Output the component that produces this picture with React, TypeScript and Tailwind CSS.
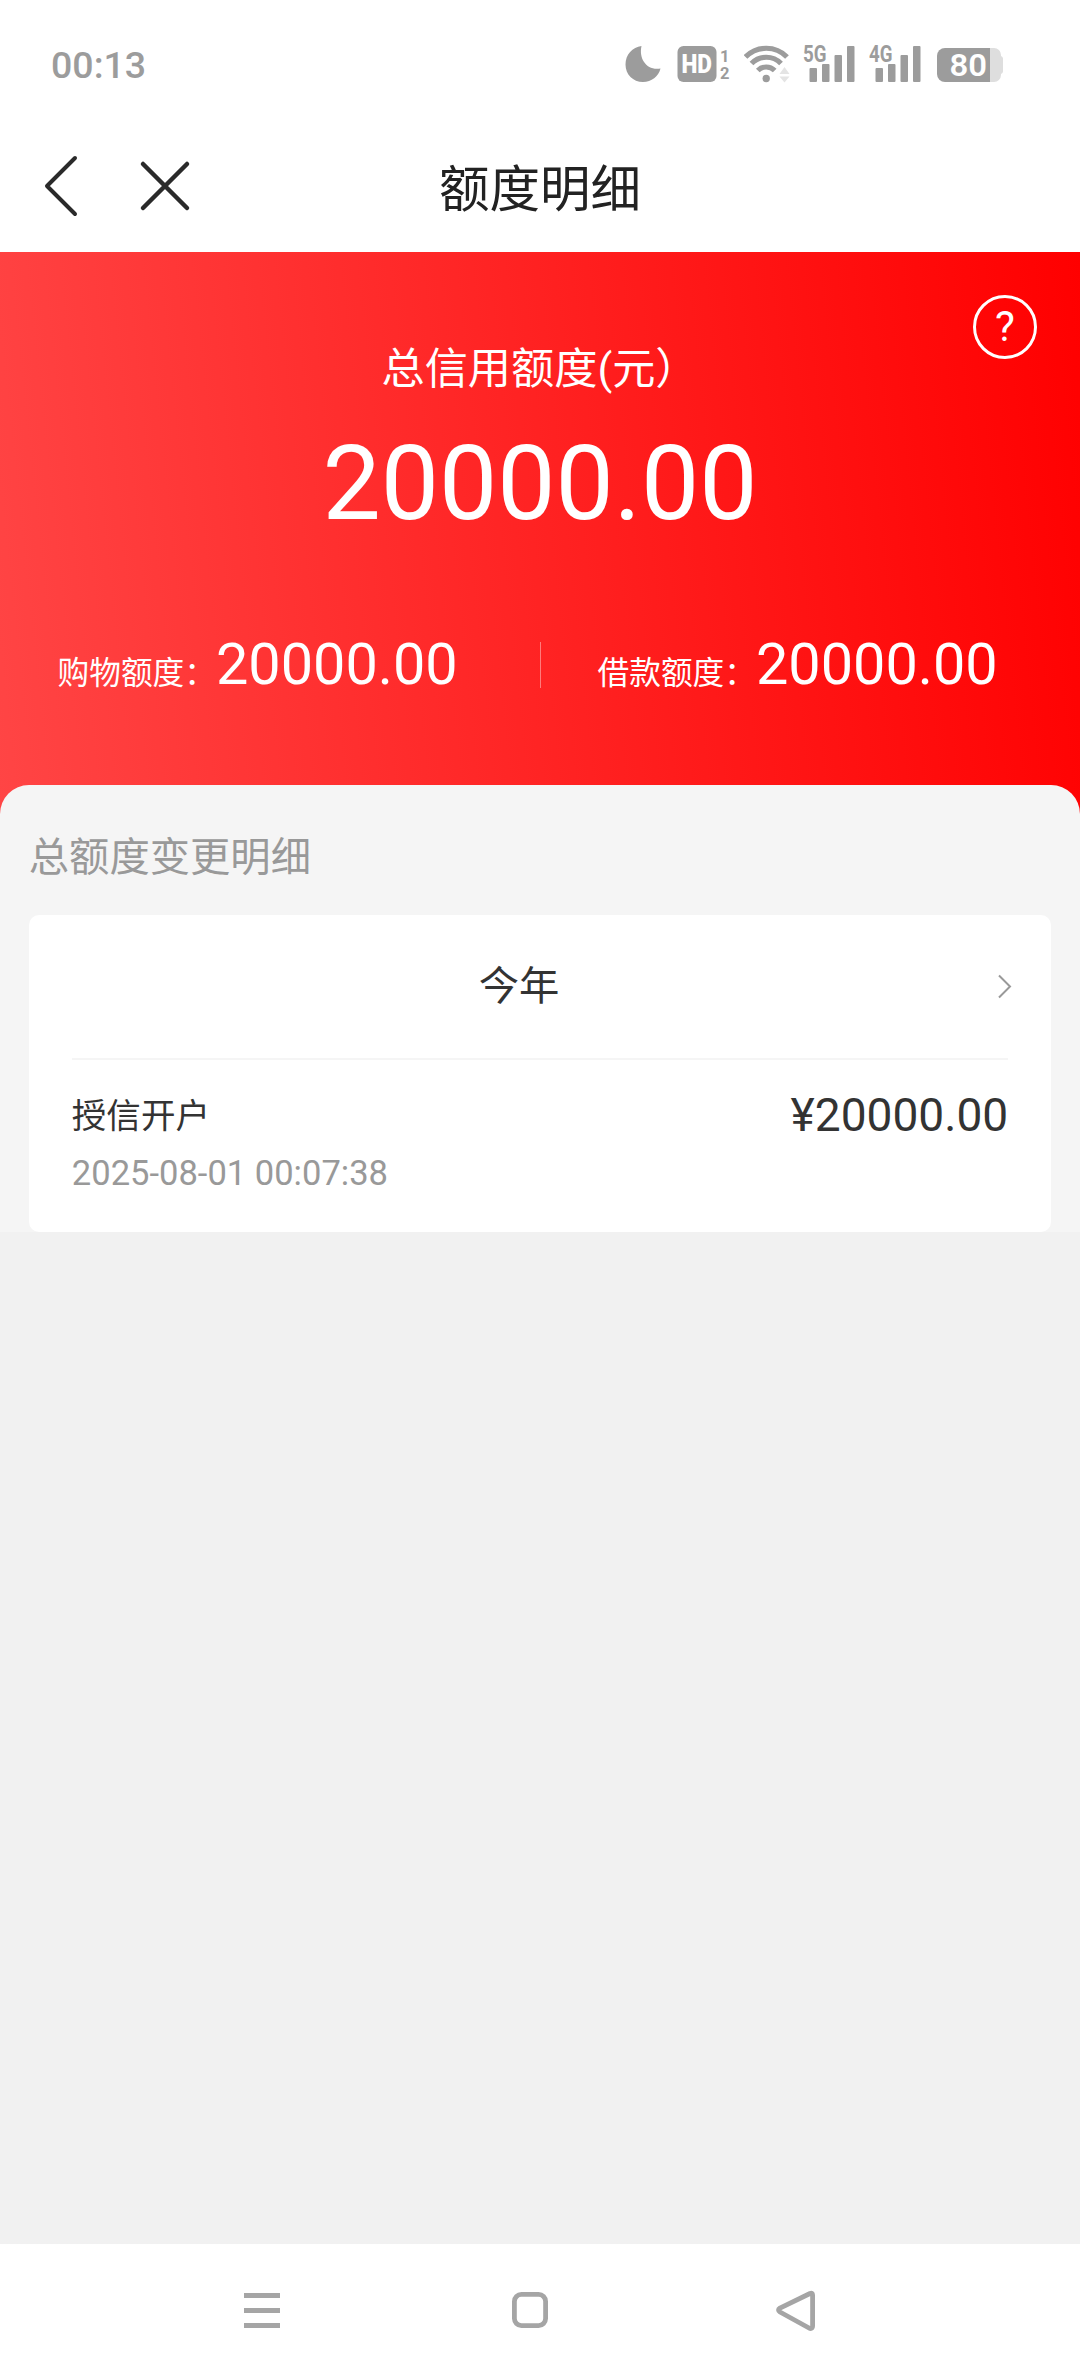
import type { ReactNode } from "react";

type QuotaProps = {
  label: string;
  amount: string;
};

type SignalProps = {
  label: string;
};

function Signal({ label }: SignalProps) {
  return (
    <svg width="54" height="56" viewBox="0 -8 54 56" fill="#9c9c9c">
      <text
        x="0"
        y="17.5"
        fontSize="23.500"
        fontWeight="700"
        fontFamily="Roboto"
        textLength="23.500"
        lengthAdjust="spacingAndGlyphs"
      >
        {label}
      </text>
      <rect x="6.5" y="24" width="7.5" height="14" rx="1" />
      <rect x="19" y="20" width="7.5" height="18" rx="1" />
      <rect x="31.5" y="11" width="7.5" height="27" rx="1" />
      <rect x="44" y="2" width="7.5" height="36" rx="1" />
    </svg>
  );
}

function StatusBar() {
  return (
    <div className="flex h-[128px] items-center justify-between pl-[51px] pr-[77px] text-[#9c9c9c]">
      <span className="mt-[3px] font-[Roboto] text-[37.500px] font-medium leading-none">
        00:13
      </span>

      <div className="flex h-10 items-center">
        {/* DO NOT DISTURB */}
        <svg width="36" height="40" viewBox="0 0 36 40" fill="#9c9c9c">
          <path d="M16.500 2C13.500 15 22 27 35.500 24.500C33.500 32.500 26.500 38 18 38C8 38 0.500 30.500 0.500 20.500C0.500 10.500 7.500 3 16.500 2Z" />
        </svg>

        {/* HD */}
        <svg
          className="ml-4"
          width="54"
          height="40"
          viewBox="0 0 54 40"
          fill="#9c9c9c"
          fontFamily="Roboto"
          fontWeight="700"
        >
          <rect x="0.500" y="2" width="39" height="36" rx="6" />
          <text
            x="4.500"
            y="29"
            fontSize="25"
            fontWeight="900"
            fill="#fff"
            textLength="30.500"
            lengthAdjust="spacingAndGlyphs"
          >
            HD
          </text>
          <text x="43" y="17.500" fontSize="16.500">1</text>
          <text x="43" y="35" fontSize="16.500">2</text>
        </svg>

        {/* WIFI */}
        <svg
          className="ml-[13px]"
          width="48"
          height="40"
          viewBox="0 0 48 40"
          fill="none"
          stroke="#9c9c9c"
          strokeWidth="5.200"
        >
          <path d="M1.500 13A29 29 0 0 1 43 13" />
          <path d="M7.500 19.500A20.500 20.500 0 0 1 37 19.500" />
          <path d="M13.800 26.500A12 12 0 0 1 30.700 26.500" />
          <circle cx="22.200" cy="34.500" r="3.700" fill="#9c9c9c" stroke="none" />
          <path d="M40.500 23l5 7h-10zM40.500 38.500l5-6h-10z" fill="#e4e4e4" stroke="none" />
        </svg>

        <div className="ml-[11px] flex gap-3">
          <Signal label="5G" />
          <Signal label="4G" />
        </div>

        {/* BATTERY */}
        <svg className="ml-[14px]" width="66" height="40" viewBox="0 0 66 40">
          <path d="M52 4h5a7 7 0 0 1 7 7v1a3 3 0 0 1 2 3v12a3 3 0 0 1-2 3v1a7 7 0 0 1-7 7h-5z" fill="#dedede" />
          <path d="M8 4h45v34H8a8 8 0 0 1-8-8V12a8 8 0 0 1 8-8z" fill="#9c9c9c" />
          <text
            x="12.500"
            y="32"
            fill="#fff"
            fontFamily="Roboto"
            fontSize="31"
            fontWeight="600"
            textLength="37.500"
            lengthAdjust="spacingAndGlyphs"
          >
            80
          </text>
        </svg>
      </div>
    </div>
  );
}

function Header() {
  return (
    <header className="grid h-[124px] grid-cols-3 items-center px-[43px] text-[#222]">
      <div className="mt-[-8px] flex items-center">
        <svg width="36" height="64" viewBox="0 0 36 64" fill="none" stroke="#2a2a2a" strokeWidth="4" strokeLinecap="round" strokeLinejoin="round">
          <path d="M32 4L4 32L32 60" />
        </svg>
        <svg className="ml-[60px]" width="52" height="52" viewBox="0 0 52 52" stroke="#2a2a2a" strokeWidth="4.500" strokeLinecap="round">
          <path d="M4 4L48 48M48 4L4 48" />
        </svg>
      </div>

      <h1 className="whitespace-nowrap text-center text-[50.500px] leading-none">额度明细</h1>
    </header>
  );
}

function Quota({ label, amount }: QuotaProps) {
  return (
    <div className="flex flex-1 items-baseline pl-[57.600px]">
      <span className="text-[31.680px] leading-none">{label}</span>
      <span className="text-[57.600px] leading-none">{amount}</span>
    </div>
  );
}

function NavIcon({ children }: { children: ReactNode }) {
  return (
    <svg width="44" height="44" viewBox="0 0 44 44" fill="none" stroke="#a5a5a5" strokeWidth="4.800">
      {children}
    </svg>
  );
}

export default function App() {
  return (
    <div className="flex h-[2376px] w-[1080px] flex-col overflow-hidden bg-[#f1f1f1] font-[Roboto,'Noto_Sans_CJK_SC',sans-serif]">
      <div className="h-[252px] bg-white">
        <StatusBar />
        <Header />
      </div>

      {/* TOTAL */}
      <section className="relative h-[562px] bg-[linear-gradient(84deg,#ff4545,#ff0000)] text-white">
        <div className="absolute right-[43px] top-[43px] flex size-16 items-center justify-center rounded-full border-[3px] border-white text-[42px] leading-none">
          ?
        </div>

        <p className="pt-[96px] text-center text-[43.200px] leading-[44px]">总信用额度(元）</p>
        <p className="mt-[40px] text-center text-[103.680px] leading-[104px]">20000.00</p>

        <div className="mt-[100px] flex h-[58px] items-center">
          <Quota label="购物额度：" amount="20000.00" />
          <div className="-mr-px h-[46px] w-px bg-white/40" />
          <Quota label="借款额度：" amount="20000.00" />
        </div>
      </section>

      {/* HISTORY */}
      <section className="relative -mt-[29px] rounded-t-[29px] bg-[#f5f5f5] px-[28.800px]">
        <h2 className="h-[129.500px] pt-[51px] text-[40.320px] leading-[44px] text-[#999]">总额度变更明细</h2>

        <div className="h-[317.500px] rounded-[10px] bg-white px-[43px] text-[#333]">
          <div className="flex h-[145px] items-center justify-between border-b-2 border-[#f5f5f5]">
            <span className="flex-1 pt-[2px] text-center text-[40.320px] leading-none">今年</span>
            <svg className="-mr-[5px] w-[47px]" width="47" height="28" viewBox="0 0 47 28" fill="none" stroke="#999" strokeWidth="2">
              <path d="M33 3.500L44 14.500L33 25.500" />
            </svg>
          </div>

          <div className="flex items-start justify-between pt-[30px]">
            <div>
              <p className="pt-px text-[34.560px] leading-[50px]">授信开户</p>
              <p className="mt-[7px] text-[34.560px] leading-[50px] text-[#999]">2025-08-01 00:07:38</p>
            </div>
            <p className="text-[46.080px] leading-[50px]">¥20000.00</p>
          </div>
        </div>
      </section>

      {/* SYSTEM NAV */}
      <nav className="mt-auto flex h-[132px] items-center gap-[224px] bg-white pl-[240px]">
        <NavIcon>
          <path d="M4 7.500h36M4 22.500h36M4 37.500h36" />
        </NavIcon>
        <NavIcon>
          <rect x="6.400" y="6.400" width="31.200" height="31.200" rx="7" />
        </NavIcon>
        <NavIcon>
          <path d="M34 5.500L4 20Q1 22 4 24L34 40.500Q36.600 41 36.600 38V7Q36.600 4.500 34 5.500Z" />
        </NavIcon>
      </nav>
    </div>
  );
}
